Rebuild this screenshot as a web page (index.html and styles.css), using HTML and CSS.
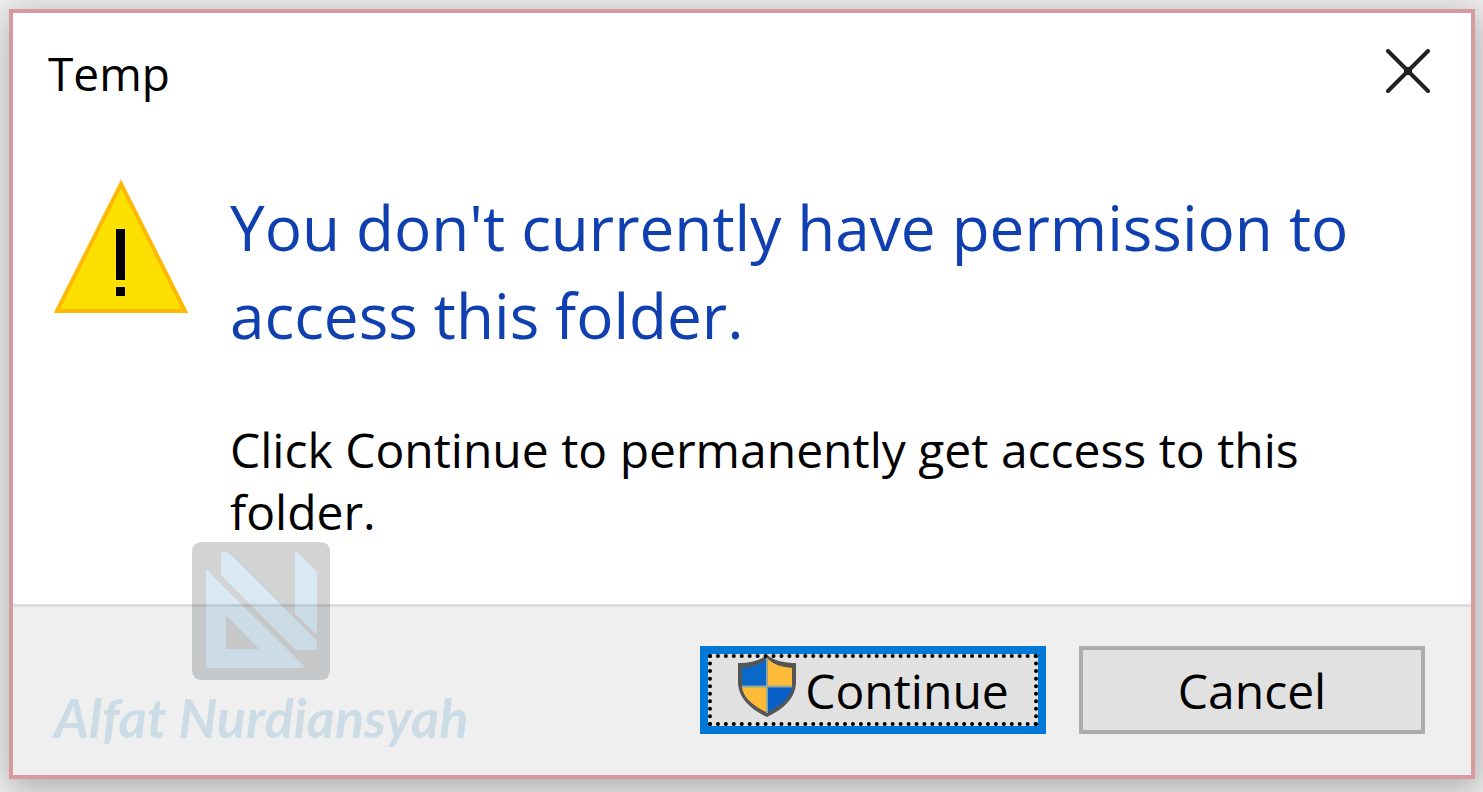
FILE: index.html
```html
<!DOCTYPE html>
<html lang="en">
<head>
<meta charset="utf-8">
<meta name="viewport" content="width=device-width, initial-scale=1">
<title>Temp</title>
<link rel="stylesheet" href="styles.css">
</head>
<body>
<main class="dialog" role="alertdialog" aria-labelledby="title" aria-describedby="message">
  <header class="titlebar">
    <span class="title" id="title">Temp</span>
    <button class="close" type="button" aria-label="Close">
      <svg viewBox="0 0 44 44" aria-hidden="true"><path d="M2 2 42 42M42 2 2 42M20 20h4v4h-4z"/></svg>
    </button>
  </header>
  <section class="content">
    <svg class="warning" viewBox="0 0 134 134" aria-hidden="true">
      <path d="M67 4 131 131H3Z" fill="#fce100" stroke="#ffb900" stroke-width="4"/>
      <path d="M62 49h9v51H62zM62 107h9v9H62z"/>
    </svg>
    <div class="copy">
      <h1 class="heading">You don't currently have permission to access this folder.</h1>
      <p class="message" id="message">Click Continue to permanently get access to this folder.</p>
    </div>
  </section>
  <footer class="actions">
    <button class="button primary" type="button">
      <svg class="shield" viewBox="0 0 60 64" aria-hidden="true">
        <path d="M30 1C22 7 13 9 1 9V30C2 44 13 55 30 63 47 55 58 44 59 30V9C47 9 38 7 30 1Z" fill="#555"/>
        <path d="M29 5V32H5V14C15 13 23 11 29 5Z" fill="#0869c9"/>
        <path d="M31 5C37 11 45 13 55 14V32H31Z" fill="#ffbb38"/>
        <path d="M5 33H29V58C15 51 6 43 5 33Z" fill="#ffbb38"/>
        <path d="M31 33H55C54 43 45 51 31 58Z" fill="#0860c7"/>
        <path d="M30 4V59M5 32.500H55" stroke="#93a69b" stroke-width="2"/>
      </svg>
      <span>Continue</span>
    </button>
    <button class="button" type="button">Cancel</button>
  </footer>
  <div class="watermark">
    <svg class="mark" viewBox="0 0 138 138" aria-hidden="true">
      <path d="M10 0H128Q138 0 138 10V128Q138 138 128 138H10Q0 138 0 128V10Q0 0 10 0Z" fill="#282b30"/>
      <g fill="#4195c8">
        <path fill-rule="evenodd" d="M14 28Q15 27 18 31L113 125Q114 126 111 126H17Q14 126 14 123ZM34 73V107H67Z"/>
        <path d="M29 13Q29 10 32 10 35 9 38 12L125 99V105Q125 108 122 108H104L29 33Z"/>
        <path d="M103 12Q104 8 107 12L125 30V93L103 72Z"/>
      </g>
    </svg>
    <span class="signature">Alfat Nurdiansyah</span>
  </div>
</main>
</body>
</html>
```
FILE: styles.css
```css
* { box-sizing: border-box; }

body {
  margin: 0;
  min-height: 100vh;
  padding: 9px 8px 13px 9px;
  display: flex;
  background: #eee;
  color: #000;
  font-family: "Open Sans", "Noto Sans", sans-serif;
}

.dialog {
  position: relative;
  flex: 1;
  display: flex;
  flex-direction: column;
  border: 4px solid #d89a9d;
  background: #fff;
  box-shadow: 2px 8px 32px 2px rgb(0 0 0 / 28%);
}

.titlebar {
  display: flex;
  justify-content: space-between;
  align-items: flex-start;
  padding: 28px 41px 0 35px;
}

.title {
  font-size: 46px;
  line-height: 64px;
}

.close {
  margin-top: 8px;
  padding: 0;
  border: 0;
  background: none;
}

.close svg {
  display: block;
  width: 44px;
  height: 44px;
  fill: none;
  stroke: #222;
  stroke-width: 4px;
  stroke-linecap: round;
}

.content {
  flex: 1;
  display: flex;
  align-items: flex-start;
  gap: 42px;
  padding: 75px 100px 0 41px;
}

.warning {
  flex: none;
  width: 134px;
  height: 134px;
}

.copy { flex: 1; }

.heading {
  margin: 3px 0 60px;
  color: #1040b0;
  font-size: 62px;
  font-weight: 400;
  line-height: 88px;
}

.message {
  margin: 0;
  font-size: 48px;
  line-height: 62px;
}

.actions {
  display: flex;
  justify-content: flex-end;
  gap: 33px;
  padding: 39px 46px 41px;
  border-top: 3px solid #dcdcdc;
  background: #efefef;
}

.button {
  display: flex;
  justify-content: center;
  align-items: center;
  gap: 8px;
  width: 346px;
  height: 88px;
  padding: 0;
  border: 4px solid #adadad;
  background: #e1e1e1;
  color: #000;
  font-family: inherit;
  font-size: 48px;
}

.primary {
  border: 8px solid #0078d7;
  outline: 4px dotted #000;
  outline-offset: -12px;
}

.shield {
  width: 60px;
  height: 64px;
  margin-bottom: 8px;
}

.watermark {
  position: absolute;
  left: 41px;
  bottom: 19px;
  display: flex;
  flex-direction: column;
  align-items: center;
  opacity: 0.2;
  pointer-events: none;
}

.mark {
  width: 138px;
  height: 138px;
}

.signature {
  color: #4195c8;
  font-family: Lato, sans-serif;
  font-size: 54px;
  font-style: italic;
  font-weight: 700;
  line-height: 76px;
  white-space: nowrap;
}
```
